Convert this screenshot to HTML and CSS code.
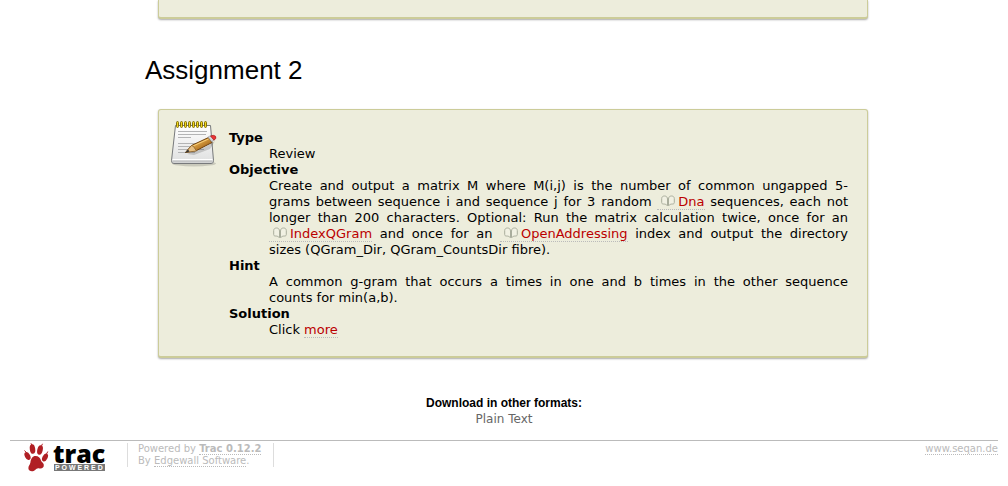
FILE: index.html
```html
<!DOCTYPE html>
<html lang="en">
<head>
<meta charset="utf-8">
<title>Assignment 2</title>
<link rel="stylesheet" href="styles.css">
</head>
<body>
<svg class="defs" aria-hidden="true">
  <symbol id="book" viewBox="0 0 14 12">
    <path d="M6.500 10.500V4C6.500 2 5.200 1 3.500 1S.7 2 .7 3.500v4c0 1 .6 1.500 1.600 1.500 2 0 3.200.5 4.200 1.800zM7.500 10.500V4c0-2 1.300-3 3-3s2.800 1 2.800 2.500v4c0 1-.6 1.500-1.600 1.500-2 0-3.200.5-4.200 1.800z" fill="#f1f1e3" stroke="#a9ad9c"/>
  </symbol>
</svg>
<main class="wiki">
  <section class="box box-end"></section>
  <h1>Assignment 2</h1>
  <section class="box">
    <svg class="note" viewBox="0 0 48 48" aria-hidden="true">
      <defs>
        <linearGradient id="paper" x1="0" y1="0" x2="0" y2="1"><stop offset="0" stop-color="#fff"/><stop offset="1" stop-color="#dedfdf"/></linearGradient>
        <linearGradient id="wood" x1="0" y1="0" x2="1" y2="1"><stop offset="0.300" stop-color="#edb650"/><stop offset="0.800" stop-color="#9b5a13"/></linearGradient>
      </defs>
      <ellipse cx="23" cy="43.500" rx="22" ry="3" fill="#000" opacity=".15"/>
      <path d="M4.500 5.500h35l3 35q.2 3-2.500 3H3q-2.700 0-2.500-3z" fill="url(#paper)" stroke="#77797b"/>
      <path d="M1.500 39.500h40" stroke="#fff"/>
      <path d="M1.500 41.500h40" stroke="#c4c5c6" stroke-width="2"/>
      <path d="M7 11.500h29M7 14.500h28M7 17.500h13M7 23.500h26M7 26.500h25M7 29.500h26M7 32.500h17" stroke="#b3b4b5"/>
      <g fill="#f1d51d" stroke="#81700b">
        <rect x="5.500" y="1.500" width="2" height="6" rx="1"/><rect x="9.500" y="1.500" width="2" height="6" rx="1"/><rect x="13.500" y="1.500" width="2" height="6" rx="1"/><rect x="17.500" y="1.500" width="2" height="6" rx="1"/><rect x="21.500" y="1.500" width="2" height="6" rx="1"/><rect x="25.500" y="1.500" width="2" height="6" rx="1"/><rect x="29.500" y="1.500" width="2" height="6" rx="1"/><rect x="33.500" y="1.500" width="2" height="6" rx="1"/>
      </g>
      <path d="M16 34l18-7 10-6-5 8-16 6z" fill="#000" opacity=".16"/>
      <path d="M14.500 32.500l6-7 17-8 3.500 5-15.500 8z" fill="url(#wood)" stroke="#704310"/>
      <path d="M21 26.500l16.500-7.500" stroke="#f7cd78" fill="none"/>
      <path d="M14.500 32.500l6-7 2 1 3 4.500z" fill="#e6bf82" stroke="#805a28" stroke-width=".7"/>
      <path d="M14 33l3-3.500 1.500 2z" fill="#333"/>
      <path d="M37 17l3-1.500 3.500 4.500-3 1.500z" fill="#d5d6da" stroke="#92959c" stroke-width=".6"/>
      <path d="M39.500 16q3-1.500 5 .2 1.500 2-1.500 4z" fill="#ec3434" stroke="#a81b20" stroke-width=".7"/>
    </svg>
    <dl>
      <dt>Type</dt>
      <dd>Review</dd>
      <dt>Objective</dt>
      <dd>
        <span class="line">Create and output a matrix M where M(i,j) is the number of common ungapped 5-</span>
        <span class="line">grams between sequence i and sequence j for 3 random <a href="#dna"><svg class="book" aria-hidden="true"><use href="#book"/></svg>Dna</a> sequences, each not</span>
        <span class="line">longer than 200 characters. Optional: Run the matrix calculation twice, once for an</span>
        <span class="line"><a href="#indexqgram"><svg class="book" aria-hidden="true"><use href="#book"/></svg>IndexQGram</a> and once for an <a href="#openaddressing"><svg class="book" aria-hidden="true"><use href="#book"/></svg>OpenAddressing</a> index and output the directory</span>
        sizes (QGram_Dir, QGram_CountsDir fibre).
      </dd>
      <dt>Hint</dt>
      <dd>
        <span class="line">A common g-gram that occurs a times in one and b times in the other sequence</span>
        counts for min(a,b).
      </dd>
      <dt>Solution</dt>
      <dd>Click <a href="#more">more</a></dd>
    </dl>
  </section>
</main>
<section class="formats">
  <h2>Download in other formats:</h2>
  <a href="#plain">Plain Text</a>
</section>
<footer>
  <a class="logo" href="#trac" aria-label="Trac Powered">
    <svg viewBox="0 0 86 30" aria-hidden="true">
      <g fill="#b01f24">
        <ellipse cx="8.500" cy="6" rx="2.700" ry="4.800" transform="rotate(-8 8.500 6)"/>
        <ellipse cx="16" cy="7" rx="2.700" ry="4.800" transform="rotate(14 16 7)"/>
        <ellipse cx="3.500" cy="13" rx="2.600" ry="4.200" transform="rotate(-28 3.500 13)"/>
        <ellipse cx="21" cy="14.500" rx="2.500" ry="4.200" transform="rotate(28 21 14.500)"/>
        <path d="M11.500 13c3 0 4.500 1.500 5.500 4.500.7 2 2.500 2 2.800 4.300.3 3-2 4.200-4.300 3.700-2-.6-3 .2-4.300 1.500-2.500 2.200-6.500 1.500-6.800-1.500-.2-2.500 1.500-3.500 2-6 .6-4 2.100-6.500 5.100-6.500z"/>
        <path d="M7 .3l.8 1.700M.5 7.500l1.800 2M18.500.8l-1 2M23.800 8.500l-1.300 2.500" stroke="#b01f24"/>
      </g>
      <text class="logo-name" x="29" y="20">trac</text>
      <rect x="30" y="21" width="51" height="7" fill="#777"/>
      <text class="logo-tag" x="31" y="27">P O W E R E D</text>
    </svg>
  </a>
  <p class="powered">Powered by <a href="#about"><strong>Trac 0.12.2</strong></a><br>By <a href="#edgewall">Edgewall Software</a>.</p>
  <p class="site"><a href="#seqan">www.seqan.de</a></p>
</footer>
</body>
</html>
```
FILE: styles.css
```css
body {
  margin: 0 10px;
  background: #fff;
  color: #000;
  font: 13px/16px Verdana, "DejaVu Sans", sans-serif;
}
.defs { display: none; }
a {
  color: #b00;
  text-decoration: none;
  border-bottom: 1px dotted #bbb;
}
.wiki { margin: 0 130px 0 135px; }
h1 {
  margin: 36px 0 24px;
  font: 26px/30px "Liberation Sans", Arial, sans-serif;
}
.box {
  display: flex;
  align-items: flex-start;
  gap: 10px;
  margin-left: 13px;
  padding: 10px 19px 18px 12px;
  background: #ededdc;
  border: 1px solid #cc9;
  border-bottom-width: 2px;
  border-radius: 3px;
  box-shadow: 0 1px 2px #aaa;
}
.box-end {
  border-top: 0;
  border-radius: 0 0 3px 3px;
  padding: 0 0 17px;
}
.note { flex: none; width: 48px; height: 48px; }
dl { flex: 1; margin: 10px 0 0; }
dt { font-weight: bold; }
dd { margin: 0 0 0 40px; }
.line { display: block; text-align: justify; text-align-last: justify; }
.book {
  width: 14px;
  height: 12px;
  margin: 0 3px 0 4px;
  vertical-align: -1px;
}
.formats {
  margin-top: 37px;
  text-align: center;
  font-size: 12px;
}
.formats h2 {
  margin: 0;
  font: bold 12px/16px "Liberation Sans", Arial, sans-serif;
}
.formats a { color: #666; border: 0; }
footer {
  display: flex;
  align-items: flex-start;
  margin-top: 13px;
  padding-top: 2px;
  border-top: 1px solid #bbb;
  color: #bbb;
  font-size: 10px;
  line-height: 12px;
}
footer a { color: #bbb; }
.logo { flex: none; border: 0; margin: 0 17px 0 14px; }
.logo svg { display: block; width: 86px; height: 30px; }
.logo-name { font: 800 25px "Open Sans", sans-serif; fill: #000; }
.logo-tag { font: bold 7px "Liberation Sans", Arial, sans-serif; fill: #fff; }
.powered {
  margin: 0;
  padding: 0 12px 0 10px;
  border: solid #ddd;
  border-width: 0 1px;
}
.site { margin: 0 0 0 auto; }
```
